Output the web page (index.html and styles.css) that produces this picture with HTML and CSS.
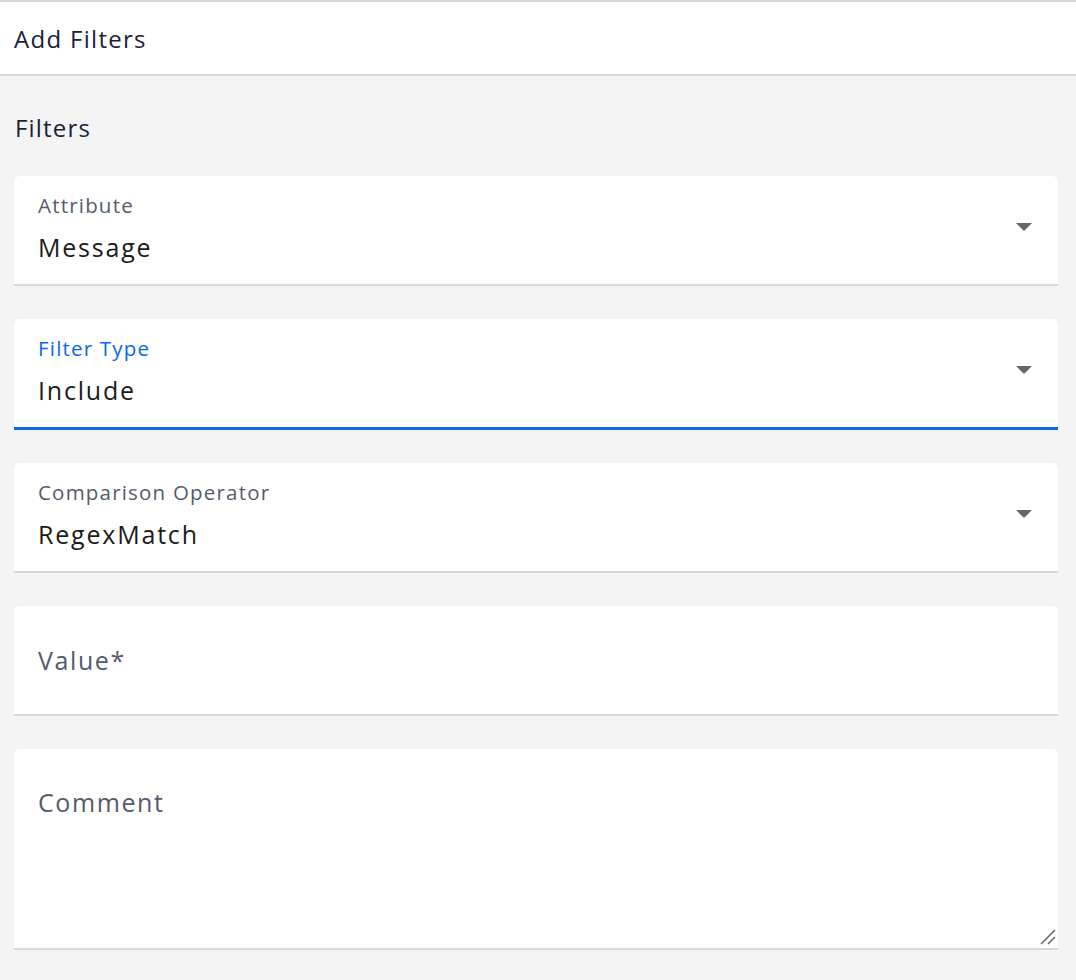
FILE: index.html
```html
<!DOCTYPE html>
<html lang="en">
<head>
  <meta charset="UTF-8" />
  <title>Add Filters</title>
  <link rel="stylesheet" href="styles.css">
</head>
<body>

  <!-- header -->
  <div class="panel-header">Add Filters</div>

  <!-- form -->
  <section class="section">
    <h2>Filters</h2>

    <form class="filter-form">
      <div class="field select">
        <div class="field-body">
          <div class="field-label">Attribute</div>
          <div class="field-value">Message</div>
        </div>
        <span class="caret"></span>
      </div>

      <div class="field select focused">
        <div class="field-body">
          <div class="field-label">Filter Type</div>
          <div class="field-value">Include</div>
        </div>
        <span class="caret"></span>
      </div>

      <div class="field select">
        <div class="field-body">
          <div class="field-label">Comparison Operator</div>
          <div class="field-value">RegexMatch</div>
        </div>
        <span class="caret"></span>
      </div>

      <div class="field">
        <input type="text" name="value" placeholder="Value*" />
      </div>

      <div class="field area">
        <textarea name="comment" placeholder="Comment"></textarea>
        <!-- resize grip -->
        <svg class="grip" width="16" height="16" viewBox="0 0 16 16">
          <path d="M1 15 L15 1 M8 15 L15 8" stroke="#6b6b6b" stroke-width="1.6" fill="none" />
        </svg>
      </div>
    </form>
  </section>

</body>
</html>
```

FILE: styles.css
```css
body {
  margin: 0;
  font-family: 'Open Sans', 'Lato', sans-serif;
  background: #f4f4f4;
  color: #1b2233;
}
.panel-header {
  background: #fff;
  border-top: 2px solid #d8d8dc;
  border-bottom: 2px solid #d8d8dc;
  box-sizing: border-box;
  height: 76px;
  display: flex;
  align-items: center;
  padding: 0 14px 0 14px;
  font-size: 24px;
  letter-spacing: 1.3px;
  color: #18223a;
}
.section {
  padding: 37px 18px 30px 14px;
}
h2 {
  margin: 0 0 33px 1px;
  font-size: 24px;
  font-weight: normal;
  letter-spacing: 1.2px;
  line-height: 30px;
  color: #18223a;
}
.filter-form {
  display: flex;
  flex-direction: column;
  gap: 33px;
}
.field {
  background: #fff;
  border-radius: 6px 6px 0 0;
  border-bottom: 2px solid #d6d6de;
  height: 110px;
  box-sizing: border-box;
  display: flex;
  align-items: center;
  position: relative;
}
.field.focused {
  border-bottom: 3px solid #0b66f0;
  height: 111px;
}
.field-body {
  flex: 1;
  padding: 0 24px;
  margin-top: -5px;
}
.field-label {
  font-size: 20.5px;
  line-height: 26px;
  letter-spacing: 1.2px;
  color: #545b6c;
}
.focused .field-label {
  color: #0b66f0;
}
.field-value {
  font-size: 25px;
  line-height: 32px;
  letter-spacing: 1.8px;
  margin-top: 13px;
  color: #1b1b1b;
}
.caret {
  width: 0;
  height: 0;
  border-left: 8px solid transparent;
  border-right: 8px solid transparent;
  border-top: 8px solid #676767;
  margin: -6px 26px 0 0;
}
input, textarea {
  width: 100%;
  height: 100%;
  box-sizing: border-box;
  border: none;
  outline: none;
  background: transparent;
  font-family: inherit;
  font-size: 25px;
  letter-spacing: 1.6px;
  color: #1b1b1b;
  padding: 0 24px;
}
input::placeholder, textarea::placeholder {
  color: #545b6c;
}
.field.area {
  height: 201px;
}
textarea {
  padding: 37px 24px 0;
  line-height: 32px;
  resize: none;
}
.grip {
  position: absolute;
  right: 2px;
  bottom: 3px;
}
```
